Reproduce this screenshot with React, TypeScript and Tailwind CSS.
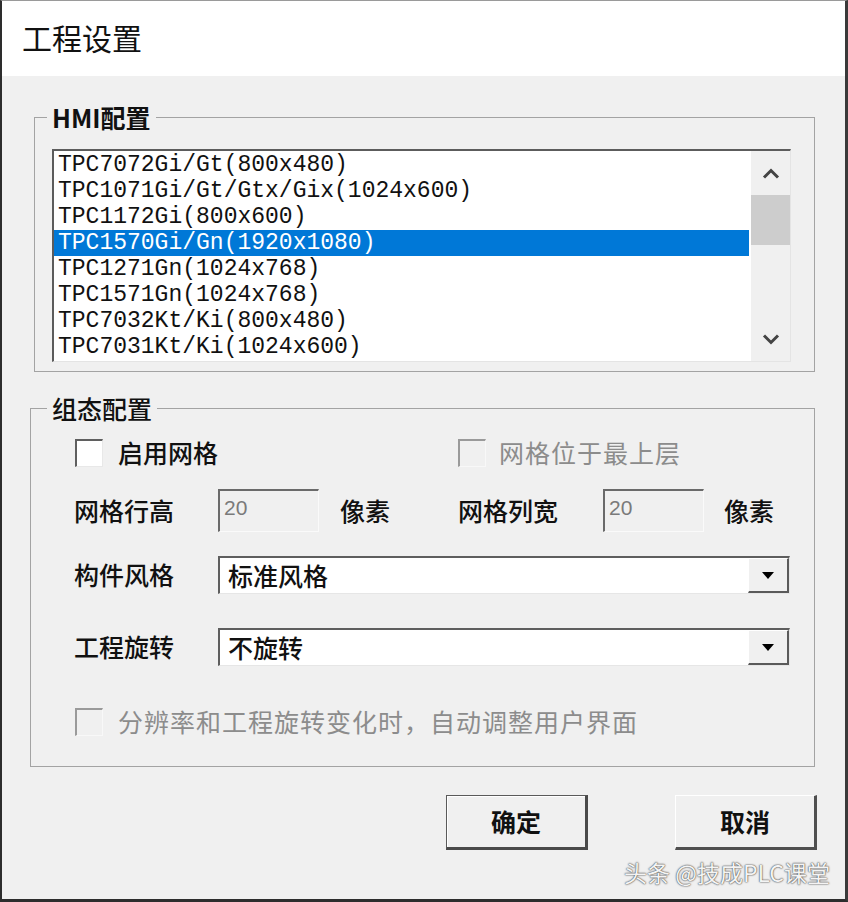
import React from "react";

const models = [
  "TPC7072Gi/Gt(800x480)",
  "TPC1071Gi/Gt/Gtx/Gix(1024x600)",
  "TPC1172Gi(800x600)",
  "TPC1570Gi/Gn(1920x1080)",
  "TPC1271Gn(1024x768)",
  "TPC1571Gn(1024x768)",
  "TPC7032Kt/Ki(800x480)",
  "TPC7031Kt/Ki(1024x600)",
];

const cjk = "font-['Noto_Sans_CJK_SC','Noto_Sans',sans-serif]";

function CheckBox({ disabled }: { disabled?: boolean }) {
  return (
    <span
      className={`block h-[28px] w-[28px] shrink-0 border-t-2 border-l-2 border-r border-b ${
        disabled
          ? "border-t-[#9a9a9a] border-l-[#9a9a9a] border-r-[#f8f8f8] border-b-[#f8f8f8] bg-[#f0f0f0]"
          : "border-t-[#5f5f5f] border-l-[#5f5f5f] border-r-[#e8e8e8] border-b-[#e8e8e8] bg-white"
      }`}
    />
  );
}

function NumBox({ value }: { value: string }) {
  return (
    <div className="flex h-[43px] w-[101px] shrink-0 items-start border-t-2 border-l-2 border-r border-b border-t-[#6a6a6a] border-l-[#6a6a6a] border-r-[#fafafa] border-b-[#fafafa] bg-[#f0f0f0] pl-[4px] pt-[4px] font-['Liberation_Sans',sans-serif] text-[21px] leading-[26px] text-[#7a7a7a]">
      {value}
    </div>
  );
}

function Combo({ value }: { value: string }) {
  return (
    <div className="flex h-[38px] w-[572px] border-t-2 border-l-2 border-r border-b border-t-[#5e5e5e] border-l-[#5e5e5e] border-r-[#e6e6e6] border-b-[#e6e6e6] bg-white">
      <div className="flex flex-1 items-center pl-[8px] text-[25px] font-medium text-[#111]">{value}</div>
      <div className="flex w-[41px] items-center justify-center border-t border-l border-r-2 border-b-2 border-t-white border-l-white border-r-[#5a5a5a] border-b-[#5a5a5a] bg-[#f0f0f0]">
        <svg width="12" height="7" viewBox="0 0 12 7">
          <path d="M0 0 L12 0 L6 7 Z" fill="#000" />
        </svg>
      </div>
    </div>
  );
}

function Chevron({ up }: { up?: boolean }) {
  return (
    <svg width="18" height="11" viewBox="0 0 18 11">
      <path
        d={up ? "M2 9.5 L9 2.5 L16 9.5" : "M2 1.5 L9 8.5 L16 1.5"}
        fill="none"
        stroke="#444"
        strokeWidth="3"
      />
    </svg>
  );
}

export default function App() {
  return (
    <div className={`flex h-[902px] w-[848px] flex-col border-t border-l-2 border-r-[3px] border-b-[3px] border-t-[#9a9a9a] border-l-[#2d2d2d] border-r-[#3a3a3a] border-b-[#2d2d2d] ${cjk}`}>
      <div className="flex h-[75px] shrink-0 items-center bg-white pl-[20px] pb-[2px] text-[30px] text-[#111]">工程设置</div>

      <div className="relative flex flex-1 flex-col bg-[#f0f0f0]">
        {/* HMI配置 */}
        <fieldset className="ml-[32px] mt-[28px] w-[781px] border border-[#a3a3a3] pb-[9px]">
          <legend className="ml-[12px] px-[5px] text-[25px] font-bold leading-[26px] text-[#111]">HMI配置</legend>
          <div className="ml-[17px] mt-[19px] flex h-[213px] w-[739px] border-t-2 border-l-2 border-r border-b border-t-[#5c5c5c] border-l-[#5c5c5c] border-r-[#e4e4e4] border-b-[#e4e4e4] bg-white">
            <div className="flex-1 pr-[2px] pt-px">
              {models.map((m, i) => (
                <div
                  key={m}
                  className={`h-[26px] whitespace-nowrap pl-[4px] font-['Liberation_Mono',monospace] text-[23px] leading-[27px] ${
                    i === 3 ? "bg-[#0078d7] text-white" : "text-[#111]"
                  }`}
                >
                  {m}
                </div>
              ))}
            </div>
            <div className="flex w-[39px] flex-col bg-[#f0f0f0]">
              <div className="flex h-[44px] items-center justify-center">
                <Chevron up />
              </div>
              <div className="h-[50px] bg-[#cdcdcd]" />
              <div className="flex-1" />
              <div className="flex h-[44px] items-center justify-center">
                <Chevron />
              </div>
            </div>
          </div>
        </fieldset>

        {/* 组态配置 */}
        <fieldset className="ml-[28px] mt-[22px] w-[785px] border border-[#a3a3a3] pb-[30px] pl-[43px] text-[25px] font-medium text-[#111]">
          <legend className="-ml-[27px] px-[5px] leading-[28px]">组态配置</legend>

          <div className="mt-[17px] flex h-[28px] items-center">
            <div className="ml-px flex w-[383px] items-center gap-[15px]">
              <CheckBox />
              <span>启用网格</span>
            </div>
            <div className="flex items-center gap-[13px] font-normal tracking-[1px] text-[#8c8c8c]">
              <CheckBox disabled />
              <span>网格位于最上层</span>
            </div>
          </div>

          <div className="mt-[22px] flex h-[43px] items-center">
            <div className="flex w-[384px] items-center">
              <span className="w-[144px]">网格行高</span>
              <NumBox value="20" />
              <span className="ml-[21px]">像素</span>
            </div>
            <span className="w-[145px]">网格列宽</span>
            <NumBox value="20" />
            <span className="ml-[20px]">像素</span>
          </div>

          <div className="mt-[24px] flex h-[38px] items-center">
            <span className="w-[144px]">构件风格</span>
            <Combo value="标准风格" />
          </div>

          <div className="mt-[34px] flex h-[38px] items-center">
            <span className="w-[144px]">工程旋转</span>
            <Combo value="不旋转" />
          </div>

          <div className="ml-px mt-[41px] flex h-[29px] items-center gap-[15px] font-normal tracking-[1px] text-[#8c8c8c]">
            <CheckBox disabled />
            <span>分辨率和工程旋转变化时，自动调整用户界面</span>
          </div>
        </fieldset>

        <div className="mt-[28px] flex justify-end gap-[87px] pr-[28px]">
          <button className="h-[55px] w-[142px] border-t border-l border-r-[3px] border-b-[3px] border-t-[#5a5a5a] border-l-[#5a5a5a] border-r-[#4a4a4a] border-b-[#4a4a4a] bg-[#f0f0f0] text-[25px] font-bold text-[#111] shadow-[inset_1px_1px_0_#fff]">
            确定
          </button>
          <button className="h-[55px] w-[142px] border-t border-l border-r-[3px] border-b-[3px] border-t-white border-l-white border-r-[#4f4f4f] border-b-[#4f4f4f] bg-[#f0f0f0] text-[25px] font-bold text-[#111]">
            取消
          </button>
        </div>

        <div className="absolute bottom-[14px] right-[15px] text-[23px] leading-[26px] text-[#f4f4f4] [text-shadow:0_0_2px_#444,0_0_1px_#444]">
          头条 @技成PLC课堂
        </div>
      </div>
    </div>
  );
}
